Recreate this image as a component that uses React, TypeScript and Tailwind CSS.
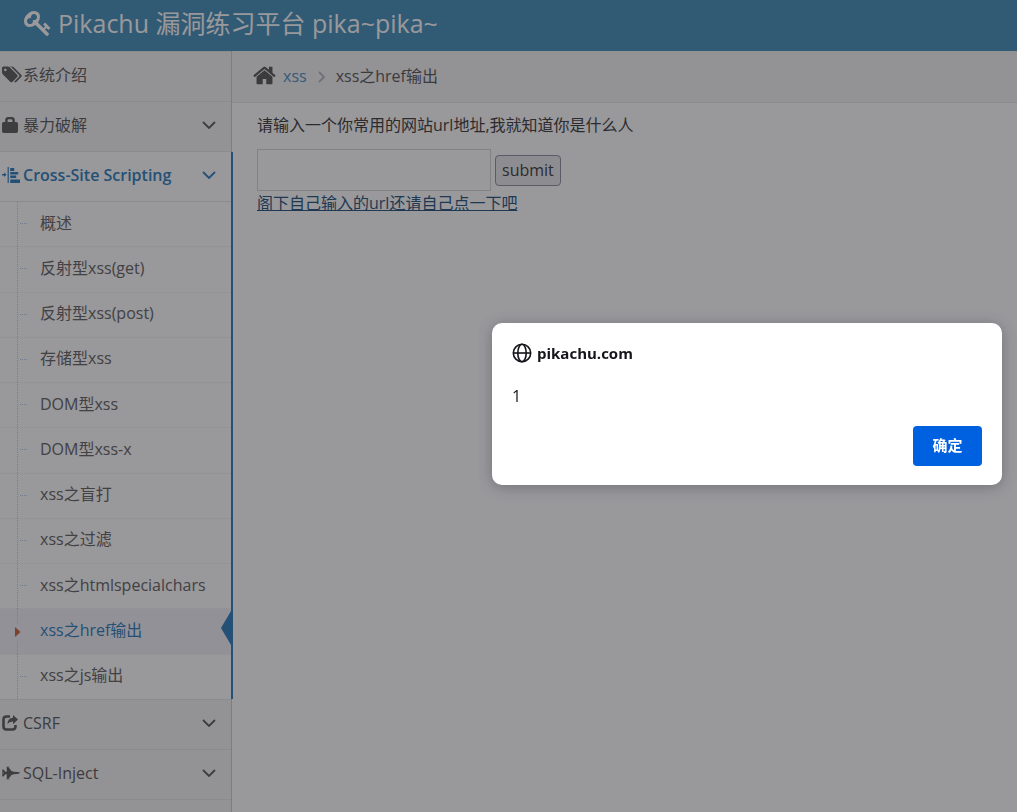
import type { ReactNode } from 'react'
import { FaFighterJet } from 'react-icons/fa'

const SUBMENU = [
  '概述',
  '反射型xss(get)',
  '反射型xss(post)',
  '存储型xss',
  'DOM型xss',
  'DOM型xss-x',
  'xss之盲打',
  'xss之过滤',
  'xss之htmlspecialchars',
  'xss之href输出',
  'xss之js输出',
]

const ACTIVE = 'xss之href输出'

function KeyIcon() {
  return (
    <svg viewBox="0 0 1792 1792" className="size-7 fill-current" aria-hidden="true">
      <path d="M832 512q0-80-56-136t-136-56-136 56-56 136q0 42 19 83-41-19-83-19-80 0-136 56t-56 136 56 136 136 56 136-56 56-136q0-42-19-83 41 19 83 19 80 0 136-56t56-136zm851 704q0 17-49 66t-66 49q-9 0-28.5-16t-36.5-33-38.5-40-24.5-26l-96 96 220 220q28 28 28 68 0 42-39 81t-81 39q-40 0-68-28l-671-671q-176 131-365 131-163 0-265.5-102.5t-102.5-265.5q0-160 95-313t248-248 313-95q163 0 265.5 102.5t102.5 265.5q0 189-131 365l355 355 96-96q-3-3-26-24.5t-40-38.5-33-36.5-16-28.5q0-17 49-66t66-49q13 0 23 10 6 6 46 44.5t82 79.5 86.5 86 73 78 28.5 41z" />
    </svg>
  )
}

function TagsIcon() {
  return (
    <svg viewBox="0 0 1920 1792" className="h-[19px] w-5 fill-current" aria-hidden="true">
      <path d="M448 448q0-53-37.5-90.5t-90.5-37.5-90.5 37.5-37.5 90.5 37.5 90.5 90.5 37.5 90.5-37.5 37.5-90.5zm1067 576q0 53-37 90l-491 492q-39 37-91 37-53 0-90-37l-715-716q-38-37-64.5-101t-26.5-117v-416q0-52 38-90t90-38h416q53 0 117 26.5t102 64.5l715 714q37 39 37 91zm384 0q0 53-37 90l-491 492q-39 37-91 37-36 0-59-14t-53-45l470-470q37-37 37-90 0-52-37-91l-715-714q-38-38-102-64.5t-117-26.5h224q53 0 117 26.5t102 64.5l715 714q37 39 37 91z" />
    </svg>
  )
}

function HomeIcon() {
  return (
    <svg viewBox="0 0 1664 1792" className="h-[25px] w-[23px] fill-current" aria-hidden="true">
      <path d="M1408 992v480q0 26-19 45t-45 19h-384v-384h-256v384h-384q-26 0-45-19t-19-45v-480q0-1 .5-3t.5-3l575-474 575 474q1 2 1 6zm223-69l-62 74q-8 9-21 11h-3q-13 0-21-7l-692-577-692 577q-12 8-24 7-13-2-21-11l-62-74q-8-10-7-23.5t11-21.5l719-599q32-26 76-26t76 26l244 204v-195q0-14 9-23t23-9h192q14 0 23 9t9 23v408l219 182q10 8 11 21.5t-7 23.5z" />
    </svg>
  )
}

function LockIcon() {
  return (
    <svg viewBox="0 0 16 16" className="size-4 fill-current" aria-hidden="true">
      <path d="M3.2 5V3.2Q3.2 0 6.2 0h3.6q3 0 3 3.2V5h1.4Q16 5 16 6.8v7.4q0 1.8-1.8 1.8H1.8Q0 16 0 14.2V6.8Q0 5 1.8 5zM5.6 5h4.8V3.6q0-1.4-1.4-1.4H7q-1.4 0-1.4 1.4z" fillRule="evenodd" />
    </svg>
  )
}

function AlignIcon() {
  return (
    <svg viewBox="0 0 18 16" className="h-4 w-[18px] fill-current" aria-hidden="true">
      <path d="M0 7h2V5.5L4.6 7.8 2 10V8.5H0zM5.6 0h1.2v16H5.6zM8.2 1h4v3h-4zM8.2 5h8v2.4h-8zM8.2 8.6h6V11h-6zM8.2 12.6H18V16H8.2z" />
    </svg>
  )
}

function ShareIcon() {
  return (
    <svg viewBox="0 0 16 16" className="size-4" aria-hidden="true">
      <path d="M8 1.5H4.5q-3 0-3 3v7q0 3 3 3h6q3 0 3-3V10" fill="none" stroke="currentColor" strokeWidth="2.6" />
      <path d="M11 0l5 4.600-5 4.600V6.500Q7.500 6.300 5.400 9 5.800 3.300 11 2.800z" fill="currentColor" />
    </svg>
  )
}

function Chevron() {
  return (
    <svg viewBox="0 0 14 8" className="ml-auto h-2 w-[14px]" aria-hidden="true">
      <path d="M1 1l6 6 6-6" fill="none" stroke="currentColor" strokeWidth="1.8" />
    </svg>
  )
}

function GlobeIcon() {
  return (
    <svg viewBox="0 0 20 20" className="size-5" fill="none" stroke="currentColor" strokeWidth="1.6" aria-hidden="true">
      <circle cx="10" cy="10" r="8.7" />
      <ellipse cx="10" cy="10" rx="4.2" ry="8.7" />
      <path d="M1.3 10h17.4" />
    </svg>
  )
}

type NavItemProps = { icon: ReactNode; label: string; open?: boolean; chevron?: boolean; children?: ReactNode }

function NavItem({ icon, label, open, chevron = true, children }: NavItemProps) {
  return (
    <li className={`relative border-t border-[#e5e5e5] ${open ? 'bg-white' : ''}`}>
      <a
        href="#"
        className={`flex h-[49px] items-center pr-[15px] pb-1 pl-0.5 ${open ? 'font-semibold text-[#2b7dbc]' : 'text-[#585858]'}`}
      >
        <span className="flex w-[21px] flex-shrink-0">{icon}</span>
        <span className="whitespace-nowrap">{label}</span>
        {chevron && <Chevron />}
      </a>
      {children}
      {open && <span className="absolute inset-y-0 -right-0.5 w-0.5 bg-[#2b7dbc]" />}
    </li>
  )
}

function Submenu() {
  return (
    <ul className="relative flex min-h-[498px] flex-col border-t border-[#e5e5e5]">
      <span className="absolute inset-y-0 left-[17px] border-l border-dotted border-[#c4d0da]" />
      {SUBMENU.map((label, i) => {
        const active = label === ACTIVE
        return (
          <li
            key={label}
            className={`relative flex flex-1 border-dotted border-[#ebebeb] ${i > 0 ? 'border-t' : ''}`}
          >
            <a
              href="#"
              className={`flex flex-1 items-center pb-[3px] pl-10 ${active ? 'bg-[#f2f2f8] text-[#2b7dbc]' : 'text-[#616161]'}`}
            >
              {label}
            </a>
            {active ? (
              <>
                {/* dotted tree line shows above and below the marker */}
                <span className="absolute inset-y-0 left-[17px] border-l border-dotted border-[#c4d0da]" />
                <span className="absolute top-1/2 left-[14px] flex h-4 w-2 -translate-y-1/2 items-center bg-[#f2f2f8]">
                  <svg viewBox="0 0 6 10" className="ml-px h-2.5 w-1.5 fill-[#c86139]" aria-hidden="true">
                    <path d="M0 0l5.5 5L0 10z" />
                  </svg>
                </span>
                <svg viewBox="0 0 10 34" className="absolute top-0.5 right-0 h-[34px] w-2.5 fill-[#2b7dbc]" aria-hidden="true">
                  <path d="M10 0L0 17l10 17z" />
                </svg>
              </>
            ) : (
              <span className="absolute top-[21px] left-5 w-[7px] border-t border-dotted border-[#b4cadb]" />
            )}
          </li>
        )
      })}
    </ul>
  )
}

function AlertDialog() {
  return (
    <div className="fixed inset-0 bg-[#1c1b22]/45">
      <div
        role="alertdialog"
        aria-modal="true"
        aria-labelledby="alert-title"
        className="absolute top-[323px] right-[15px] flex w-[510px] flex-col rounded-[10px] bg-white px-5 pt-[18px] pb-[19px] text-[15px] leading-6 text-[#15141a] shadow-[0_2px_14px_rgba(58,57,68,0.4)]"
      >
        <h2 id="alert-title" className="flex items-center gap-[5px] font-bold">
          <GlobeIcon />
          pikachu.com
        </h2>
        <p className="mt-[19px] text-base">1</p>
        <button className="mt-[18px] h-10 w-[69px] self-end rounded bg-[#0061e0] pb-0.5 font-semibold text-white">确定</button>
      </div>
    </div>
  )
}

export default function App() {
  return (
    <div className="flex min-h-screen flex-col bg-white font-['Open_Sans','Noto_Sans_CJK_SC',sans-serif] text-base text-[#393939]">
      <header className="flex h-[51px] items-center bg-[#438eb9] pb-1.5 pl-6 text-white">
        <a href="#" className="flex items-center gap-1.5 text-[25px] leading-10">
          <KeyIcon />
          Pikachu 漏洞练习平台 pika~pika~
        </a>
      </header>

      <div className="flex flex-1">
        <nav className="w-[232px] flex-shrink-0 border-r border-[#ccc] bg-[#f4f4f4]">
          <ul className="border-b border-[#e5e5e5]">
            <NavItem icon={<TagsIcon />} label="系统介绍" chevron={false} />
            <NavItem icon={<LockIcon />} label="暴力破解" />
            <NavItem icon={<AlignIcon />} label="Cross-Site Scripting" open>
              <Submenu />
            </NavItem>
            <NavItem icon={<ShareIcon />} label="CSRF" />
            <NavItem icon={<FaFighterJet className="h-4 w-[18px]" />} label="SQL-Inject" />
          </ul>
        </nav>

        <main className="min-w-0 flex-1">
          <ol className="flex h-[52px] items-center border-b border-[#e5e5e5] bg-[#f5f5f5] pb-0.5 pl-[21px] text-[#555]">
            <li className="flex items-center gap-[7px]">
              <HomeIcon />
              <a href="#" className="text-[#4c8fbd]">xss</a>
            </li>
            <li className="flex items-center">
              <svg viewBox="0 0 7 12" className="mx-[11px] mt-0.5 h-3 w-[7px]" fill="none" stroke="#b2b6bf" strokeWidth="1.8" aria-hidden="true">
                <path d="M1 1l5 5-5 5" />
              </svg>
              xss之href输出
            </li>
          </ol>

          <div className="px-[25px] pt-2.5">
            <label htmlFor="url" className="block">
              请输入一个你常用的网站url地址,我就知道你是什么人
            </label>
            <form className="mt-3 flex items-center gap-1" onSubmit={e => e.preventDefault()}>
              <input id="url" type="text" className="h-[42px] w-[234px] border border-[#d5d5d5] bg-white px-2" />
              <button type="submit" className="h-[31px] rounded border border-[#8f8f9d] bg-[#e9e9ed] px-1.5">
                submit
              </button>
            </form>
            <a href="#" className="text-[#23527c] underline">阁下自己输入的url还请自己点一下吧</a>
          </div>
        </main>
      </div>

      <AlertDialog />
    </div>
  )
}
